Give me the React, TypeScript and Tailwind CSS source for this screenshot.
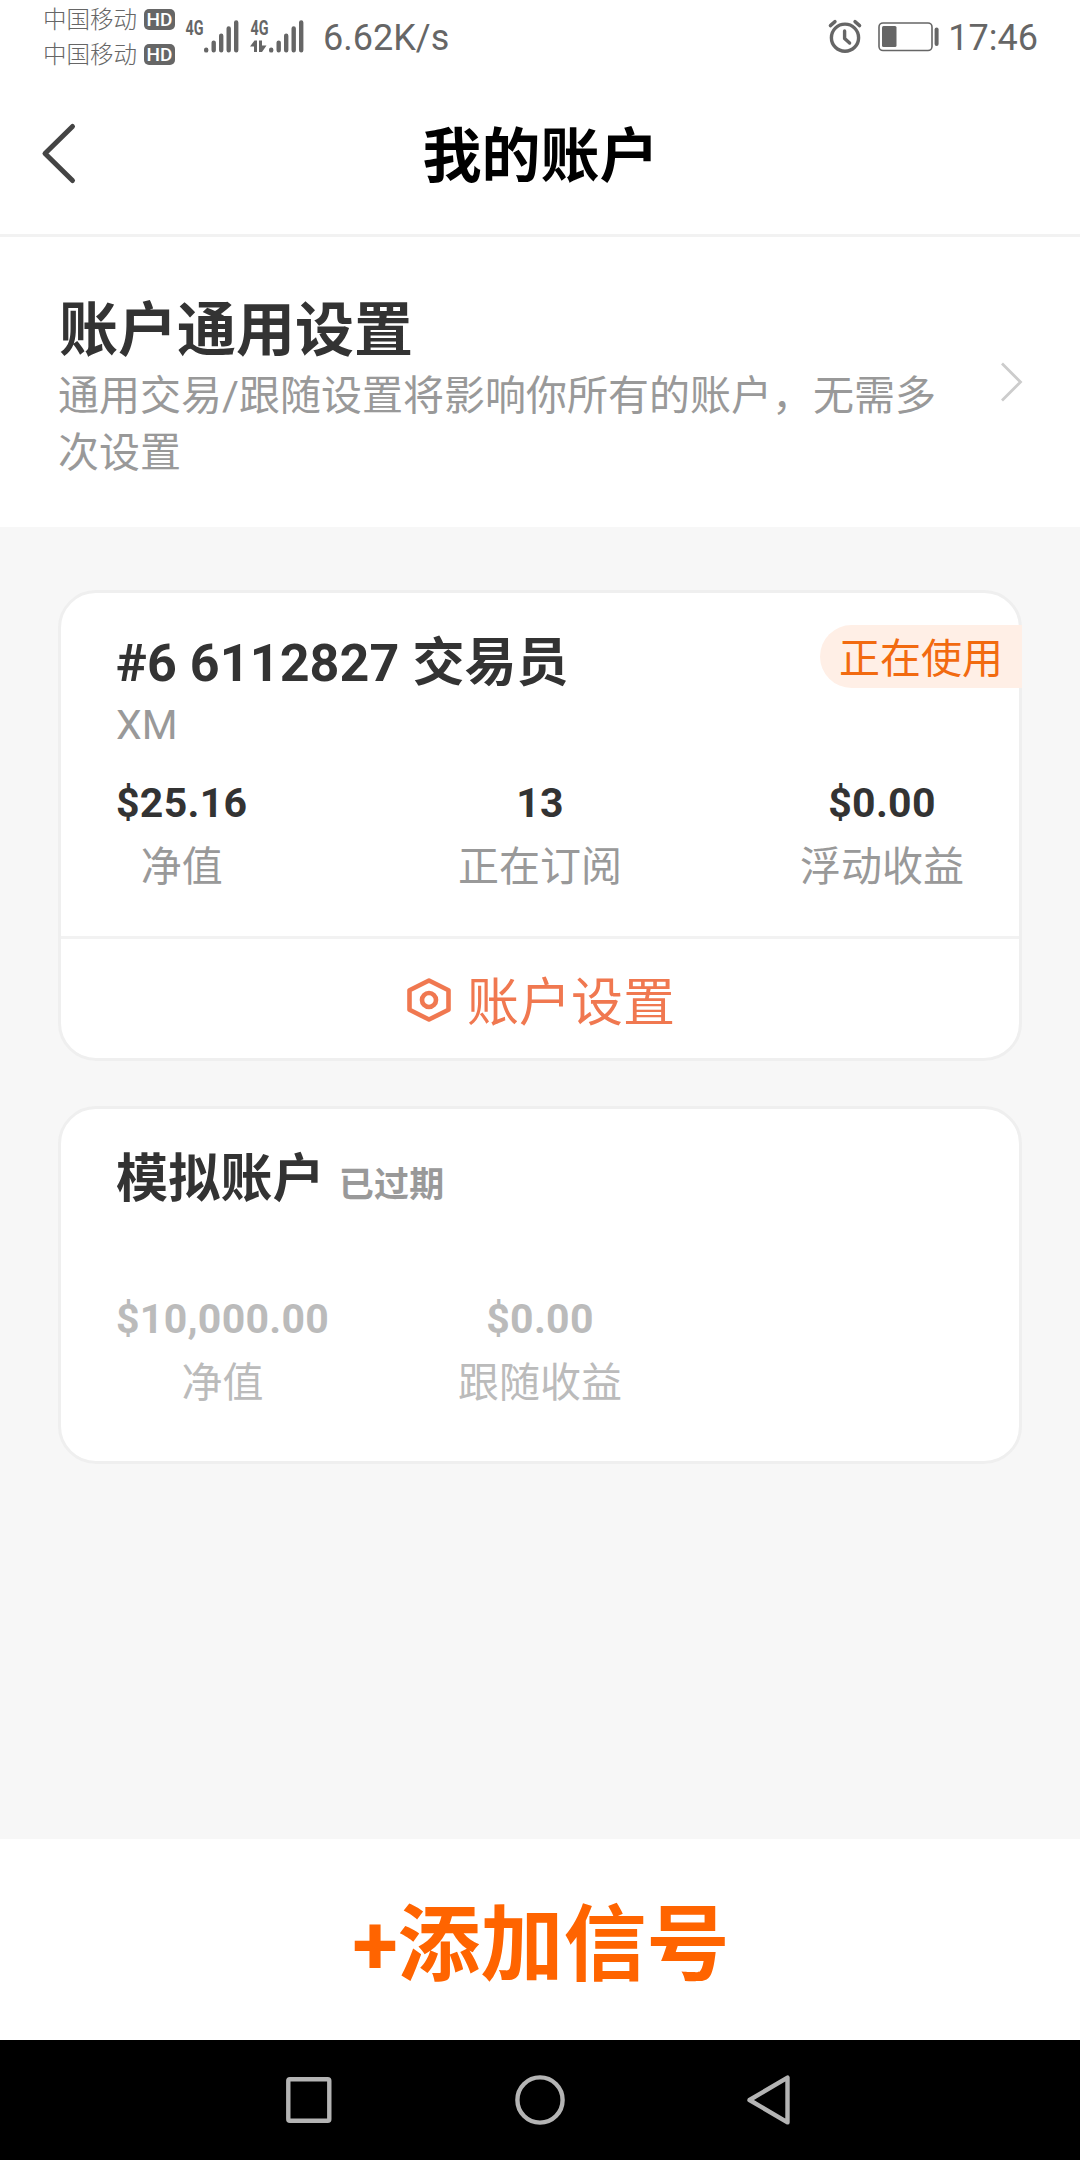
type Stat = { value: string; label: string };

const liveStats: Stat[] = [
  { value: '$25.16', label: '净值' },
  { value: '13', label: '正在订阅' },
  { value: '$0.00', label: '浮动收益' },
];

const demoStats: Stat[] = [
  { value: '$10,000.00', label: '净值' },
  { value: '$0.00', label: '跟随收益' },
];

const statAlign = ['justify-self-start', 'justify-self-center', 'justify-self-end'];

function Stats({ items, className }: { items: Stat[]; className: string }) {
  return (
    <div className={`grid grid-cols-3 px-[55px] ${className}`}>
      {items.map((item, i) => (
        <div key={item.label} className={`flex flex-col items-center ${statAlign[i]}`}>
          <span className="text-[41px] leading-[62px] font-bold tracking-[0.3px]">{item.value}</span>
          <span className="stat-label mt-[2px] text-[41px] leading-[62px]">{item.label}</span>
        </div>
      ))}
    </div>
  );
}

function Carrier() {
  return (
    <div className="flex h-[35px] items-center gap-[7px]">
      <span className="pt-px text-[23.5px] leading-[35px] font-light">中国移动</span>
      <span className="flex h-[21px] w-[31px] items-center justify-center rounded-[5px] bg-[#666] font-['Roboto'] text-[19px] leading-[21px] font-medium text-white">
        HD
      </span>
    </div>
  );
}

function Signal({ data }: { data?: boolean }) {
  return (
    <svg className="h-[36px] w-[54px] overflow-visible" viewBox="0 0 54 36" fill="none" stroke="#666">
      <text
        x="0.5"
        y="15.5"
        textLength="18"
        lengthAdjust="spacingAndGlyphs"
        fill="#666"
        stroke="none"
        className="font-['Roboto'] text-[21px] font-bold"
      >
        4G
      </text>
      <g strokeWidth="4.4" strokeLinecap="round">
        <path d="M21.2 30.8v.6M28.7 23.6v7.6M36.2 16.8v14.4M43.7 9.4v21.8M51.2 3.4v27.8" />
      </g>
      {data && (
        <g fill="#666" stroke="none">
          <path d="M0 27.5 4.5 21.5H7V33H4V27.5Z" />
          <path d="M9 21.5h3V26.5h4.5L12 33H9Z" />
        </g>
      )}
    </svg>
  );
}

function StatusBar() {
  return (
    <div className="flex h-[74px] items-start justify-between pr-[42px] pl-[43px] text-[#666]">
      <div className="flex">
        <div className="flex flex-col pt-[2px]">
          <Carrier />
          <Carrier />
        </div>
        <div className="flex gap-[11px] pt-[19px] pl-[10px]">
          <Signal />
          <Signal data />
        </div>
        <span className="pt-[17px] pl-[19px] font-['Roboto'] text-[36px] leading-[42px]">6.62K/s</span>
      </div>
      <div className="flex">
        <svg className="mt-[19px] h-[36px] w-[36px]" viewBox="0 0 36 36" fill="none" stroke="#666" strokeLinecap="round">
          <circle cx="18" cy="18.7" r="13.6" strokeWidth="3.4" />
          <path d="M17.6 12v7.4l5 4.6" strokeWidth="3.4" strokeLinejoin="round" />
          <path d="M3.4 6.6 8 2.6M28 2.6l4.6 4" strokeWidth="3.4" />
        </svg>
        <svg className="mt-[21px] ml-[14px] h-[32px] w-[64px]" viewBox="0 0 64 32">
          <rect x="2" y="2" width="53" height="27.5" rx="4" fill="none" stroke="#666" strokeWidth="1.6" />
          <rect x="5" y="5" width="14.5" height="21" rx="1.5" fill="#666" />
          <rect x="57.6" y="6.5" width="4" height="18.5" rx="2" fill="#666" />
        </svg>
        <span className="pt-[17px] pl-[7px] font-['Roboto'] text-[36px] leading-[42px]">17:46</span>
      </div>
    </div>
  );
}

function Header() {
  return (
    <header className="grid h-[163px] grid-cols-[1fr_auto_1fr] items-center border-b-[3px] border-[#f2f2f2]">
      <svg className="mb-px ml-[38px] h-[64px] w-[42px]" viewBox="0 0 42 64" fill="none" stroke="#444" strokeWidth="5" strokeLinecap="round" strokeLinejoin="round">
        <path d="M34.5 4.5 7 31.5 34.5 58.5" />
      </svg>
      <h1 className="pt-[6px] pl-px text-[59px] leading-[80px] font-bold text-black">我的账户</h1>
    </header>
  );
}

function GeneralSettings() {
  return (
    <section className="flex h-[290px] items-start bg-white pl-[58px]">
      <div className="w-[890px] pt-[53px]">
        <h2 className="pl-px text-[59px] leading-[82px] font-bold">账户通用设置</h2>
        <p className="mt-[-4px] text-[41px] leading-[57px] text-[#999]">
          通用交易/跟随设置将影响你所有的账户，无需多次设置
        </p>
      </div>
      <svg className="mt-[123px] ml-[51px] h-[44px] w-[26px]" viewBox="0 0 26 44" fill="none" stroke="#ccc" strokeWidth="2.8">
        <path d="M3 3.5 21.5 22 3 40.5" />
      </svg>
    </section>
  );
}

function LiveAccount() {
  return (
    <section className="relative mx-[58px] h-[471px] rounded-[38px] border-[3px] border-[#efefef] bg-white">
      <div className="h-[343px] pt-9">
        <h3 className="px-[55px] text-[52px] leading-[70px] font-bold tracking-[0.1px]">#6 6112827 交易员</h3>
        <p className="mt-[-1px] px-[55px] text-[41px] leading-[54px] text-[#999]">XM</p>
        <Stats items={liveStats} className="pt-[20px] [&_.stat-label]:text-[#999]" />
      </div>
      <button className="flex h-[122px] w-full items-center justify-center gap-[15px] border-t-[3px] border-[#f2f2f2] pl-px text-[#f07850]">
        <svg className="mt-[2px] h-[46px] w-[46px]" viewBox="0 0 46 46" fill="none" stroke="currentColor" strokeWidth="4.6" strokeLinejoin="round">
          <path d="M23 3.5 42.5 13.2V32.8L23 42.5 3.5 32.8V13.2Z" />
          <circle cx="23" cy="23" r="7" />
        </svg>
        <span className="pt-[10px] text-[52px] leading-[70px]">账户设置</span>
      </button>
      <span className="absolute top-[32px] right-[-3px] h-[63px] w-[202px] rounded-l-full bg-[#ffefe6] pl-[19px] text-[41px] leading-[69px] text-[#f26a10]">
        正在使用
      </span>
    </section>
  );
}

function DemoAccount() {
  return (
    <section className="mx-[58px] mt-[45px] h-[358px] rounded-[38px] border-[3px] border-[#efefef] bg-white pt-[36px]">
      <h3 className="flex items-baseline gap-[14px] px-[55px] text-[52px] leading-[70px] font-bold tracking-[0.2px]">
        模拟账户
        <span className="text-[35px] text-[#999]">已过期</span>
      </h3>
      <Stats items={demoStats} className="pt-[67px] text-[#bbb]" />
    </section>
  );
}

function NavBar() {
  return (
    <nav className="flex h-[120px] items-center justify-center gap-[177px] bg-black">
      <svg className="h-[54px] w-[54px]" viewBox="0 0 54 54" fill="none" stroke="#b4b4b4" strokeWidth="4.4">
        <rect x="6.3" y="6.2" width="41" height="41.6" rx="1.6" />
      </svg>
      <svg className="h-[54px] w-[54px]" viewBox="0 0 54 54" fill="none" stroke="#b4b4b4" strokeWidth="4.4">
        <circle cx="27" cy="27" r="22.6" />
      </svg>
      <svg className="h-[54px] w-[54px]" viewBox="0 0 54 54" fill="none" stroke="#b4b4b4" strokeWidth="4.4" strokeLinejoin="round">
        <path d="M43.5 4.6V49.4L5.5 27Z" />
      </svg>
    </nav>
  );
}

export default function App() {
  return (
    <div className="flex h-[2160px] w-[1080px] flex-col bg-white font-['Roboto','Noto_Sans_CJK_SC',sans-serif] text-[#333]">
      <StatusBar />
      <Header />
      <GeneralSettings />
      <main className="flex-1 bg-[#f7f7f7] pt-[63px]">
        <LiveAccount />
        <DemoAccount />
      </main>
      <button className="h-[201px] bg-white pt-[12px] pl-[2px] text-[83px] leading-[120px] font-bold text-[#ff6400]">
        +添加信号
      </button>
      <NavBar />
    </div>
  );
}
